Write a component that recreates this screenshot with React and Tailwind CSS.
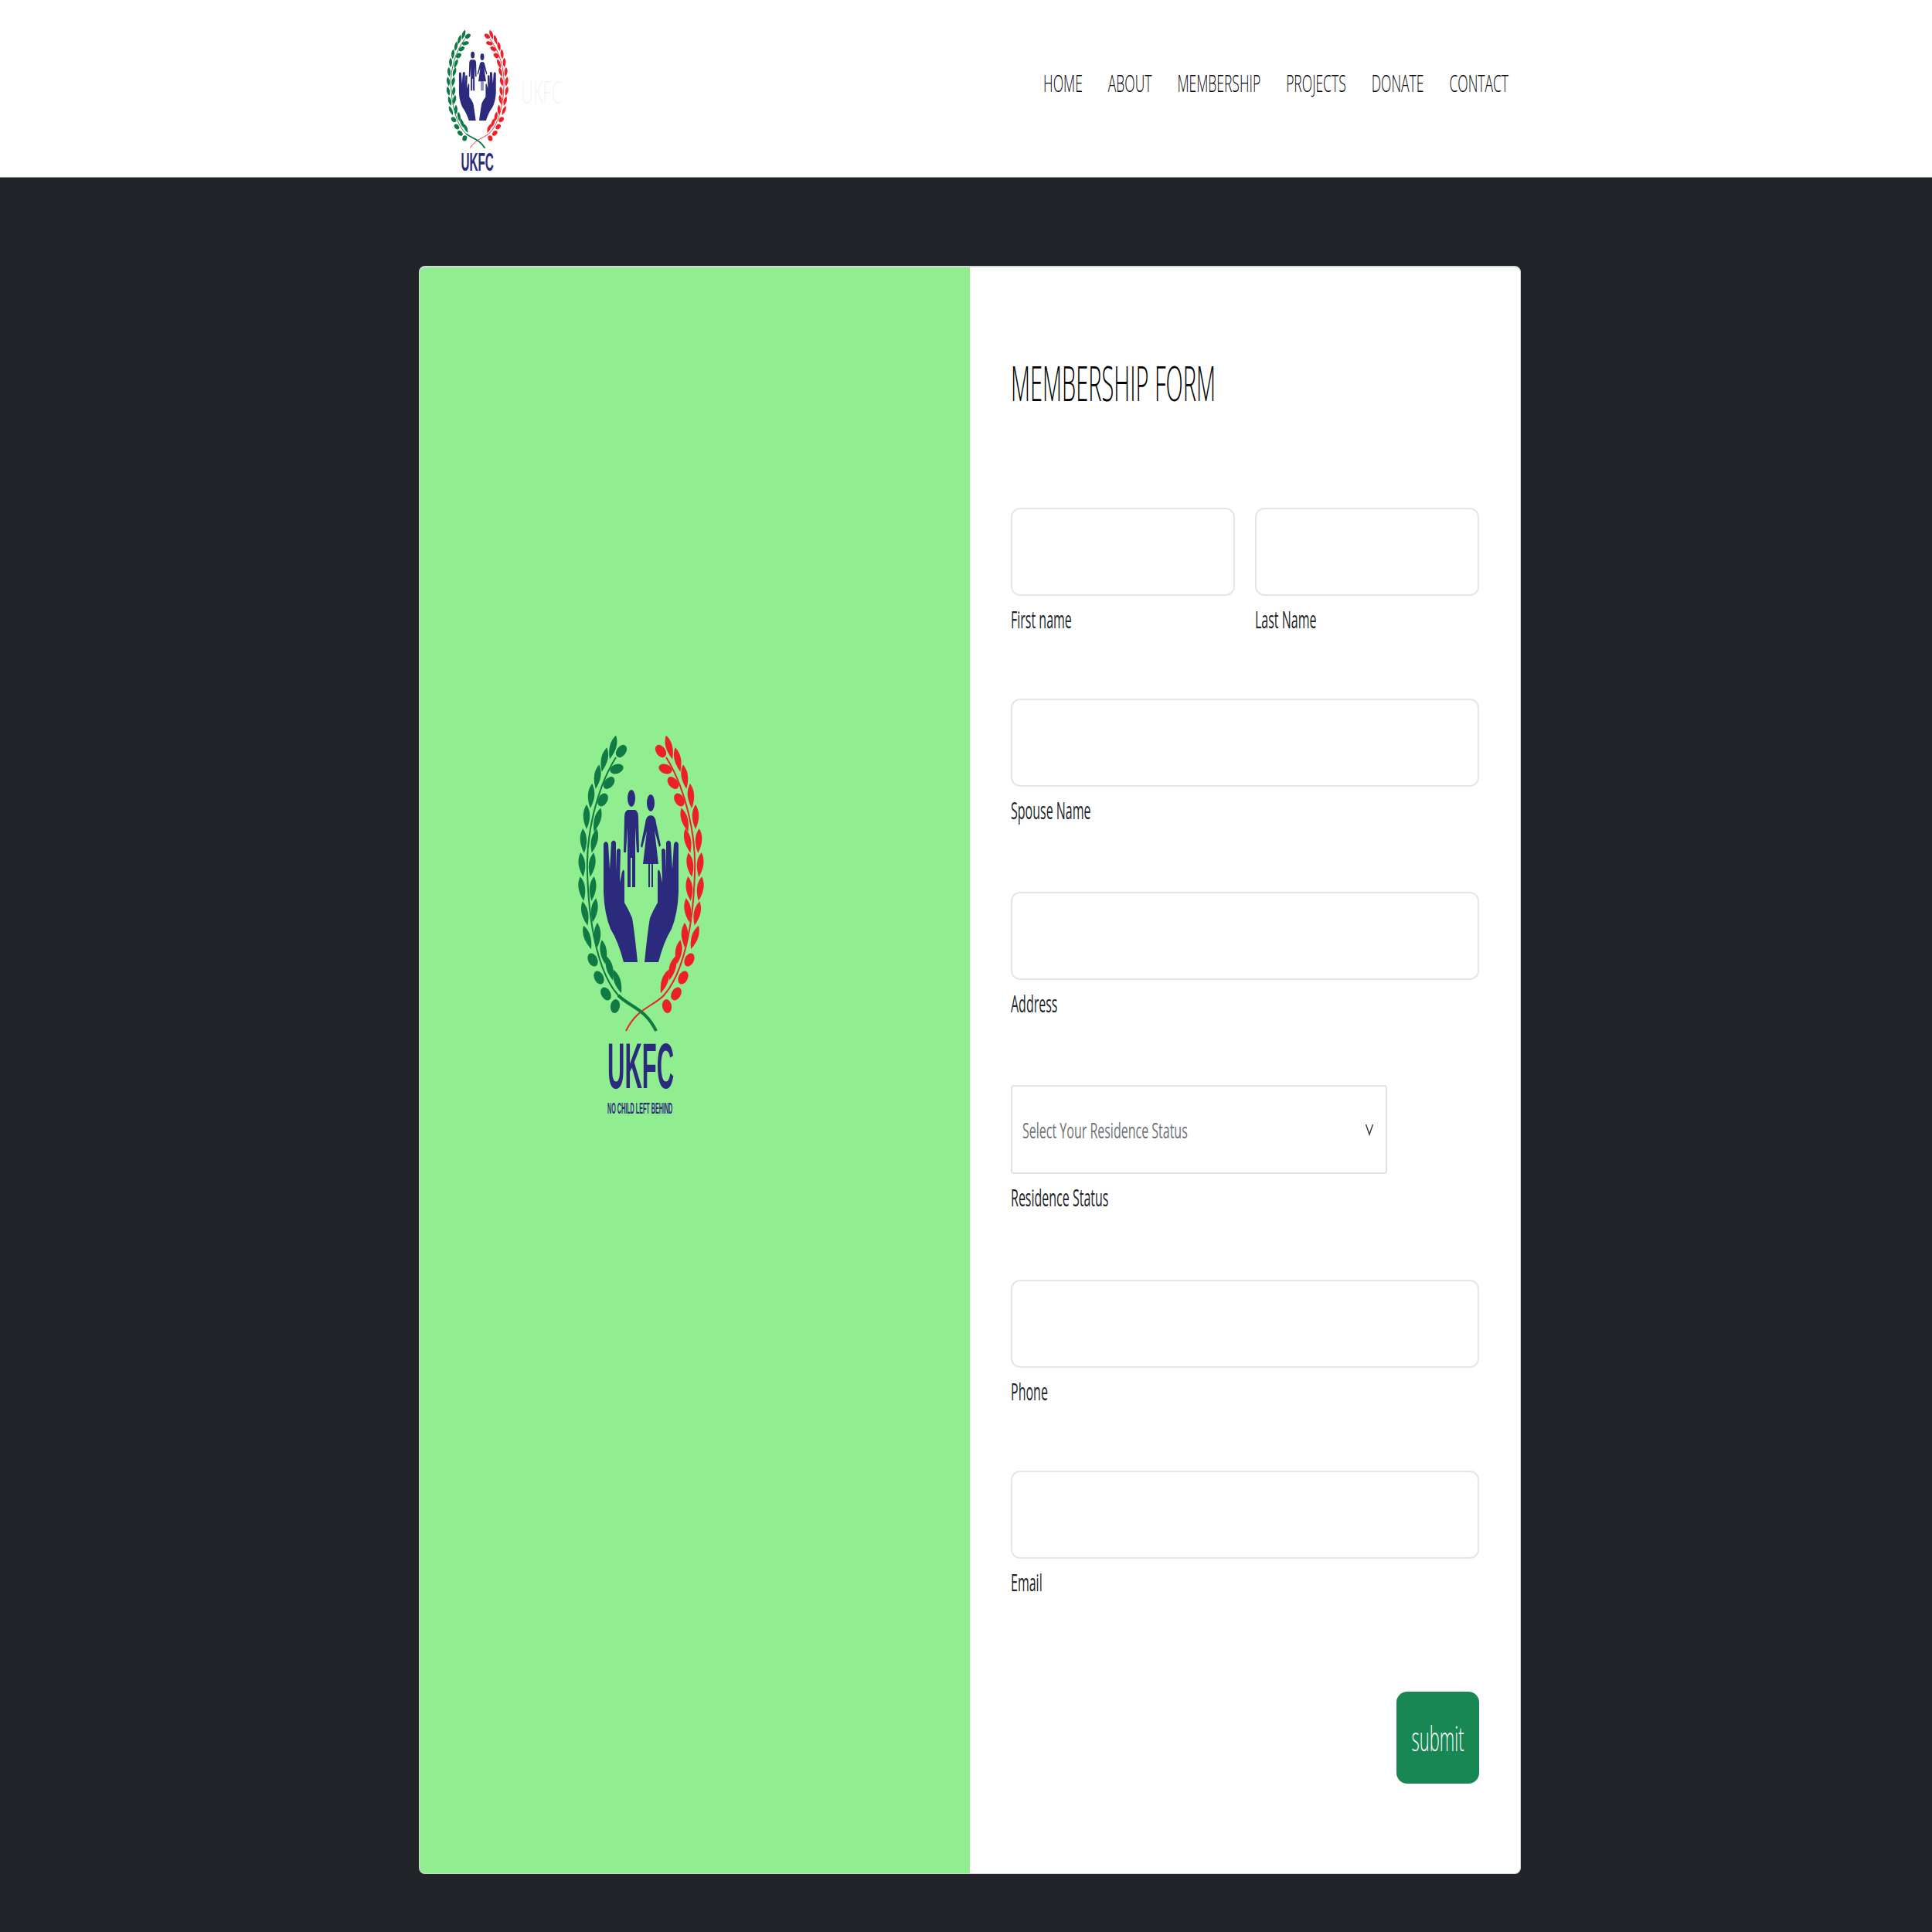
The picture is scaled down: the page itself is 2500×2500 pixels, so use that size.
const navy = "#2b2a7c";

const outerLeaves = [
  [93, 47, 15], [82, 63, 12], [73, 85, 8], [65, 110, 4], [59, 137, 0], [55, 168, -3],
  [53, 199, -6], [53, 230, -8], [57, 262, -12], [60, 293, -18],
];
const innerLeaves = [
  [73, 290, 0], [81, 312, -8], [89, 333, -14], [99, 350, -18], [69, 258, 8], [67, 230, 6], [66, 199, 8],
  [69, 168, 12], [73, 141, 16],
];
const blobs = [
  [104, 52, 35], [98, 75, 70], [88, 93, 40], [80, 115, 30],
  [67, 322, -25], [75, 345, -25], [84, 366, -30], [96, 382, 10],
];

function Branch({ color }) {
  return (
    <g fill={color}>
      <path d="M97 60 C72 100 58 160 60 210 C62 280 75 340 100 368 C115 383 135 385 149 414" fill="none" stroke={color} strokeWidth="2" />
      {outerLeaves.concat(innerLeaves).map(([x, y, r], i) => (
        <path key={i} d="M0 -16 Q8.5 -3 0 16 Q-8.5 -3 0 -16 Z" transform={`translate(${x} ${y}) rotate(${r})`} />
      ))}
      {blobs.map(([x, y, r], i) => (
        <ellipse key={i} cx={x} cy={y} rx="6" ry="9" transform={`rotate(${r} ${x} ${y})`} />
      ))}
    </g>
  );
}

function Hand() {
  return (
    <path
      fill={navy}
      d="M81 172 Q84 166 87 172 L89 205 L91 170 Q94 165 97 170 L97 208 L98 180 Q101 176 103 180 L102 222 L105 208 Q107 203 108 208 L108 248 Q114 258 118 268 Q121 285 125 325 L107 325 Q100 298 90 282 Q82 262 81 235 Z"
    />
  );
}

function Logo({ className }) {
  return (
    <svg viewBox="0 0 280 530" preserveAspectRatio="none" className={className}>
      <Branch color="#0f7a43" />
      <g transform="translate(259 0) scale(-1 1)">
        <Branch color="#ec2027" />
      </g>
      <path d="M100 368 C115 383 135 385 149 414" fill="none" stroke="#0f7a43" strokeWidth="4" />
      <Hand />
      <g transform="translate(259 0) scale(-1 1)">
        <Hand />
      </g>
      <g fill={navy}>
        <ellipse cx="117" cy="113" rx="5" ry="11" />
        <path d="M112 128 L122 128 Q126 130 126 138 L127 183 L124 183 L122 150 L122 228 L118 228 L118 190 L116 190 L116 228 L112 228 L112 150 L110 183 L107 183 L108 138 Q108 130 112 128 Z" />
        <ellipse cx="142" cy="119" rx="5" ry="11" />
        <path d="M142 135 Q148 135 149 145 L155 174 L153 176 L147 155 L152 198 L145 198 L145 228 L143 228 L143 198 L141 198 L141 228 L139 228 L139 198 L132 198 L137 155 L131 177 L129 175 L135 145 Q136 135 142 135 Z" />
        <text transform="translate(86 488) scale(1 2.7)" fontFamily="Liberation Sans" fontWeight="700" fontSize="31">UKFC</text>
        <text transform="translate(86 521) scale(1 2.7)" fontFamily="Liberation Sans" fontWeight="700" fontSize="7.2">NO CHILD LEFT BEHIND</text>
      </g>
    </svg>
  );
}

function NavLink({ children }) {
  return <a className="inline-block scale-y-[1.76] whitespace-nowrap text-[17.5px] font-light text-black">{children}</a>;
}

function Field({ label, className }) {
  return (
    <div className={className}>
      <input className="block h-[114px] w-full rounded-[12px] border-2 border-[#e3e6ea] bg-white" />
      <div className="h-[63px] leading-[63px]">
        <span className="inline-block scale-y-[1.9] whitespace-nowrap text-[16px] text-[#212529]">{label}</span>
      </div>
    </div>
  );
}

export default function App() {
  return (
    <div className="min-h-[2500px] bg-[#212529] font-['Open_Sans',sans-serif]">
      <header className="h-[230px] overflow-hidden border-b border-[#8d8f91] bg-white">
        <div className="ml-[542px] flex h-full w-[1426px] justify-between pr-[16px]">
          <div className="flex items-start pl-[12px] pt-[26px]">
            <Logo className="h-[212px] w-[138px] shrink-0" />
            <span className="ml-[-18px] mt-[76px] inline-block scale-y-[1.8] text-[22px] font-light text-[#f3f5f5]">UKFC</span>
          </div>
          <nav className="flex items-center gap-[33px] pb-[14px]">
            <NavLink>HOME</NavLink>
            <NavLink>ABOUT</NavLink>
            <NavLink>MEMBERSHIP</NavLink>
            <NavLink>PROJECTS</NavLink>
            <NavLink>DONATE</NavLink>
            <NavLink>CONTACT</NavLink>
          </nav>
        </div>
      </header>

      <main className="pt-[114px]">
        <div className="ml-[542px] flex h-[2081px] w-[1426px] overflow-hidden rounded-[8px] border border-t-2 border-[#d5d7d9] bg-white">
          <div className="w-[712px] shrink-0 bg-[#90ee90] pl-[157px] pt-[574px]">
            <Logo className="h-[530px] w-[280px]" />
          </div>
          <form className="flex-1 pl-[53px] pr-[53px] pt-[123px]">
            <div className="h-[51px] leading-[51px]">
              <h1 className="inline-block scale-y-[2.15] whitespace-nowrap text-[29px] font-light text-black">MEMBERSHIP FORM</h1>
            </div>
            <div className="mt-[137px] flex gap-[26px]">
              <Field label="First name" className="flex-1" />
              <Field label="Last Name" className="flex-1" />
            </div>
            <Field label="Spouse Name" className="mt-[70px]" />
            <Field label="Address" className="mt-[73px]" />
            <div className="mt-[73px]">
              <div className="flex h-[115px] w-[487px] items-center justify-between rounded-[4px] border-2 border-[#e3e3e3] pl-[13px] pr-[16px]">
                <span className="inline-block scale-y-[1.75] whitespace-nowrap text-[16px] text-[#6d7278]">Select Your Residence Status</span>
                <svg viewBox="0 0 10 18" className="h-[18px] w-[10px] text-[#3a3f44]" fill="none" stroke="currentColor" strokeWidth="1.5">
                  <path d="M0.5 2 L5 15 L9.5 2" />
                </svg>
              </div>
              <div className="h-[63px] leading-[63px]">
                <span className="inline-block scale-y-[1.9] whitespace-nowrap text-[16px] text-[#212529]">Residence Status</span>
              </div>
            </div>
            <Field label="Phone" className="mt-[74px]" />
            <Field label="Email" className="mt-[70px]" />
            <div className="mt-[109px] flex justify-end">
              <button type="button" className="h-[119px] w-[107px] rounded-[14px] bg-[#198754] text-white">
                <span className="inline-block scale-y-[2] text-[22px] font-light">submit</span>
              </button>
            </div>
          </form>
        </div>
      </main>
    </div>
  );
}
